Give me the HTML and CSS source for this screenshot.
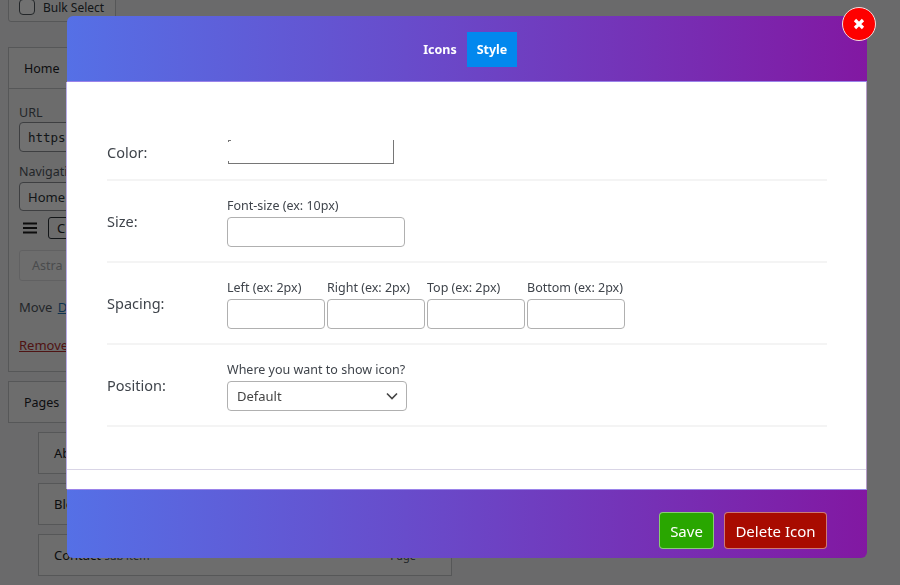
FILE: index.html
```html
<!DOCTYPE html>
<html lang="en">
<head>
<meta charset="utf-8">
<title>Menu icon</title>
<link rel="stylesheet" href="styles.css">
</head>
<body>
<div class="page">
  <div class="bulk"><span class="check"></span><span class="bulk-label">Bulk Select</span></div>
  <section class="item">
    <div class="item-head">Home</div>
    <div class="item-body">
      <div class="lbl">URL</div>
      <div class="field field-url mono">https://example.com</div>
      <div class="lbl nav-lbl">Navigation Label</div>
      <div class="field">Home</div>
      <div class="icons-row">
        <svg class="burger" width="16" height="12" viewBox="0 0 16 12"><path d="M1 1.5h14M1 6h14M1 10.5h14" stroke="#1d1d1d" stroke-width="2"/></svg>
        <span class="choose">Choose Icon</span>
      </div>
      <div class="astra">Astra</div>
      <div class="move">Move <a class="move-link">Down one</a></div>
      <div class="remove"><a class="remove-link">Remove</a></div>
    </div>
  </section>
  <section class="item pages"><div class="item-head">Pages</div></section>
  <div class="sub">About</div>
  <div class="sub">Blog</div>
  <div class="sub sub-split"><span>Contact <span class="sub-note">sub item</span></span><span class="sub-note">Page</span></div>
</div>

<div class="overlay"></div>

<div class="modal">
  <header class="modal-head">
    <span class="tab">Icons</span>
    <span class="tab tab-active">Style</span>
  </header>
  <main class="modal-body">
    <div class="rows">
      <div class="row row-color">
        <div class="row-name">Color:</div>
        <div class="color-box"></div>
      </div>
      <div class="row">
        <div class="row-name">Size:</div>
        <div class="cell">
          <div class="hint">Font-size (ex: 10px)</div>
          <div class="input input-size"></div>
        </div>
      </div>
      <div class="row">
        <div class="row-name">Spacing:</div>
        <div class="cell cell-multi">
          <div class="multi"><div class="hint">Left (ex: 2px)</div><div class="input"></div></div>
          <div class="multi"><div class="hint">Right (ex: 2px)</div><div class="input"></div></div>
          <div class="multi"><div class="hint">Top (ex: 2px)</div><div class="input"></div></div>
          <div class="multi"><div class="hint">Bottom (ex: 2px)</div><div class="input"></div></div>
        </div>
      </div>
      <div class="row">
        <div class="row-name">Position:</div>
        <div class="cell">
          <div class="hint">Where you want to show icon?</div>
          <div class="input select">
            <span>Default</span>
            <svg width="12" height="8" viewBox="0 0 12 8"><path d="M1 1.5l5 5 5-5" fill="none" stroke="#444" stroke-width="1.6"/></svg>
          </div>
        </div>
      </div>
    </div>
    <div class="rule"></div>
  </main>
  <footer class="modal-foot">
    <span class="btn btn-save">Save</span>
    <span class="btn btn-delete">Delete Icon</span>
  </footer>
  <div class="close">
    <svg width="12" height="12" viewBox="0 0 12 12"><path d="M2 2l8 8M10 2l-8 8" stroke="#fff" stroke-width="3.2"/></svg>
  </div>
</div>
</body>
</html>
```
FILE: styles.css
```css
* { box-sizing: border-box; }
html, body { margin: 0; height: 100%; overflow: hidden; }
body {
  background: #f0f0f1;
  font-family: "Noto Sans", "Open Sans", sans-serif;
  color: #1d2327;
  font-size: 13px;
}
.page { padding: 0 0 0 8px; width: 460px; }
.bulk {
  width: 108px; height: 30px; margin-top: -8px;
  border: 1px solid #c3c4c7; border-radius: 3px; background: #f6f7f7;
  display: flex; align-items: center; padding-left: 10px; gap: 8px;
}
.check { width: 16px; height: 16px; border: 1px solid #50575e; border-radius: 4px; background: #fff; }
.bulk-label { font-size: 12px; color: #2c3338; }
.item { width: 444px; margin-top: 25px; border: 1px solid #c3c4c7; background: #f6f7f7; }
.item-head { height: 40px; padding: 0 15px; display: flex; align-items: center; font-size: 12.5px; }
.item-body { height: 283px; border-top: 1px solid #c3c4c7; padding: 15px 10px 0; background: #f3f3f4; }
.lbl { font-size: 12.5px; line-height: 18px; color: #50575e; }
.nav-lbl { margin: 11px 0 1px; }
.field {
  height: 29px; width: 300px; border: 1px solid #8c8f94; border-radius: 4px; background: #fff;
  padding: 0 8px; display: flex; align-items: center; font-size: 13px; color: #2c3338;
}
.field-url { height: 30px; }
.mono { font-family: "DejaVu Sans Mono", monospace; font-size: 12.5px; }
.icons-row { display: flex; align-items: center; gap: 10px; height: 32px; margin-top: 1px; margin-left: 3px; }
.choose { border: 1px solid #2c3338; border-radius: 3px; height: 22px; padding: 0 8px; display: flex; align-items: center; }
.astra {
  width: 300px; height: 31px; margin-top: 6px; padding: 0 12px; display: flex; align-items: center;
  border: 1px solid #dcdcde; border-radius: 3px; color: #a7aaad; background: #f6f7f7; font-size: 12.5px;
}
.move { margin-top: 17px; color: #50575e; font-size: 13px; }
.move-link { color: #2271b1; text-decoration: underline; margin-left: 2px; }
.remove { margin-top: 20px; font-size: 13px; }
.remove-link { color: #b32d2e; text-decoration: underline; }
.pages { margin-top: 9px; height: 42px; }
.sub {
  width: 414px; height: 42px; margin: 9px 0 0 30px; padding: 0 15px; display: flex; align-items: center;
  border: 1px solid #c3c4c7; background: #f6f7f7; font-size: 13px;
}
.sub-split { justify-content: space-between; padding-right: 35px; }
.sub-note { color: #50575e; font-size: 11px; }
.overlay { position: fixed; inset: 0; background: rgba(0, 0, 0, 0.555); }

.modal {
  position: absolute; left: 67px; top: 16px; width: 800px; height: 542px;
  display: flex; flex-direction: column;
  border-radius: 6px; overflow: visible;
}
.modal-head {
  height: 66px; flex: none; display: flex; justify-content: center; align-items: center;
  padding-top: 1px; padding-right: 4px; border-radius: 6px 6px 0 0;
  background: linear-gradient(90deg, #5570e6 0%, #6a48c8 47%, #8218a2 100%);
  border-bottom: 1px solid #9a83ea;
}
.tab { width: 54px; height: 35px; display: flex; align-items: center; justify-content: center; color: #fff; font-weight: 700; font-size: 12.5px; }
.tab-active { width: 50px; background: #0288ee; }
.modal-body {
  flex: 1; background: #fff; display: flex; flex-direction: column; margin-left: -1px;
  border-left: 1px solid #b9aee8; border-right: 1px solid #b69cc8;
}
.rows { flex: none; padding: 41px 39px 0 40px; }
.row { display: flex; align-items: center; min-height: 82px; padding-bottom: 2px; border-bottom: 2px solid #f4f4f4; color: #444; }
.row-color { min-height: 58px; height: 58px; padding-bottom: 0; }
.row-name { width: 121px; font-size: 14.5px; color: #3f444b; flex: none; padding-top: 1px; }
.color-box {
  width: 166px; height: 24px; margin-top: 1px;
  border-right: 1px solid #767676; border-bottom: 1px solid #767676;
  background:
    linear-gradient(#767676, #767676) 0 0 / 3px 1px no-repeat,
    linear-gradient(#767676, #767676) 0 0 / 1px 2px no-repeat,
    linear-gradient(#767676, #767676) 0 100% / 1px 2px no-repeat;
}
.cell { display: flex; flex-direction: column; margin-left: -1px; padding-top: 3px; }
.cell-multi { flex-direction: row; gap: 2px; }
.multi { width: 98px; display: flex; flex-direction: column; }
.hint { font-size: 12.5px; line-height: 17px; color: #3f444b; white-space: nowrap; margin-bottom: 3px; }
.input { height: 30px; width: 98px; border: 1px solid #b0b0b0; border-radius: 4px; background: #fff; }
.input-size { width: 178px; }
.select {
  width: 180px; display: flex; align-items: center; justify-content: space-between;
  padding: 0 8px 0 9px; font-size: 13px; color: #444;
}
.rule { margin-top: 42px; border-top: 1px solid #d9d5e6; }
.modal-foot {
  height: 69px; flex: none; display: flex; justify-content: flex-end; align-items: flex-start;
  gap: 10px; padding: 22px 40px 0 0; border-radius: 0 0 6px 6px; margin-top: auto;
  background: linear-gradient(90deg, #5570e6 0%, #6a48c8 47%, #8218a2 100%);
  border-top: 1px solid #9a83ea;
}
.btn {
  height: 37px; display: flex; align-items: center; color: #fff; font-size: 15px;
  border: 1px solid rgba(255, 255, 255, 0.45); border-radius: 4px;
}
.btn-save { width: 55px; justify-content: center; background: #29a600; }
.btn-delete { width: 103px; justify-content: center; background: #a80b00; }
.close {
  position: absolute; right: -9px; top: -9px; width: 34px; height: 34px; border-radius: 50%;
  background: #fe0000; border: 1px solid #f4dede; display: flex; align-items: center; justify-content: center;
}
```
